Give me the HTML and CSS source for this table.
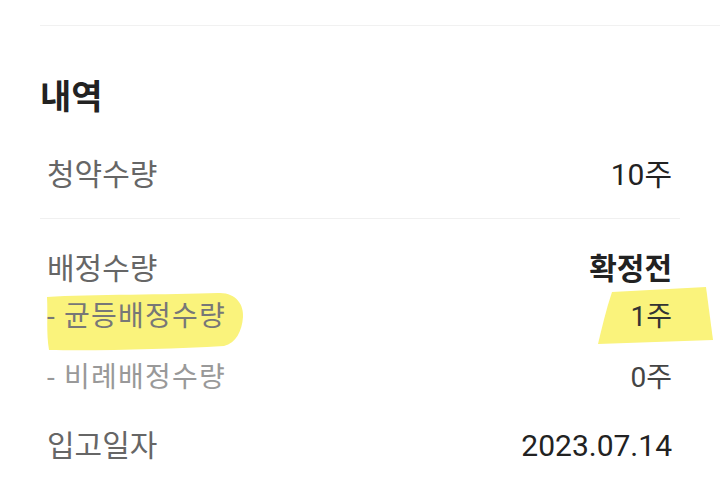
FILE: index.html
```html
<!DOCTYPE html>
<html lang="ko">

<head>
    <meta charset="UTF-8">
    <meta name="viewport" content="width=device-width, initial-scale=1.0">
    <title>내역</title>
    <link rel="stylesheet" href="styles.css">
</head>

<body>
    <div class="top-line"></div>
    <section class="details">
        <h2>내역</h2>
        <div class="row row-first">
            <span class="label">청약수량</span>
            <span class="value">10주</span>
        </div>
        <div class="divider"></div>
        <div class="row row-main">
            <span class="label">배정수량</span>
            <span class="value bold">확정전</span>
        </div>
        <div class="row sub marked">
            <svg class="marker" width="680" height="70" viewBox="0 0 680 70">
                <path d="M7,12 C50,9 130,10 178,8 C196,7 204,20 203,32 C202,46 196,58 184,61 C130,64 60,66 9,65 C6,48 8,30 7,12 Z" />
                <path d="M572,7 L666,2 L673,55 L558,59 C562,42 566,25 572,7 Z" />
            </svg>
            <span class="label">- 균등배정수량</span>
            <span class="value">1주</span>
        </div>
        <div class="row sub light">
            <span class="label">- 비례배정수량</span>
            <span class="value">0주</span>
        </div>
        <div class="row row-date">
            <span class="label">입고일자</span>
            <span class="value">2023.07.14</span>
        </div>
    </section>
</body>

</html>
```

FILE: styles.css
```css
body {
    font-family: Roboto, "Noto Sans CJK KR", sans-serif;
    margin: 0;
    padding: 0;
    background-color: #fff;
    color: #222;
}

.top-line {
    margin: 25px 0 0 40px;
    border-top: 1px solid #f1f1f1;
}

.details {
    padding: 0 40px;
}

h2 {
    margin: 0;
    padding-top: 49px;
    font-size: 34px;
    line-height: 44px;
    font-weight: bold;
    color: #222;
}

.row {
    position: relative;
    display: flex;
    justify-content: space-between;
    align-items: center;
    padding: 0 8px 0 7px;
    font-size: 30px;
    line-height: 40px;
}

.row .label {
    color: #666;
}

.row .value {
    color: #222;
}

.row span {
    position: relative;
}

.bold {
    font-weight: bold;
}

.row-first {
    margin-top: 36px;
}

.divider {
    margin-top: 23px;
    border-top: 1px solid #f0f0f0;
}

.row-main {
    margin-top: 30px;
}

.sub {
    font-size: 28px;
    line-height: 36px;
    margin-top: 10px;
}

.sub .label {
    color: #777;
    letter-spacing: 1.2px;
}

.sub .value {
    color: #333;
}

.light {
    margin-top: 25px;
}

.light .label {
    color: #999;
}

.light .value {
    color: #444;
}

.row-date {
    margin-top: 30px;
}

.marker {
    position: absolute;
    left: 0;
    top: -14px;
    overflow: visible;
}

.marker path {
    fill: #faf37c;
}
```
